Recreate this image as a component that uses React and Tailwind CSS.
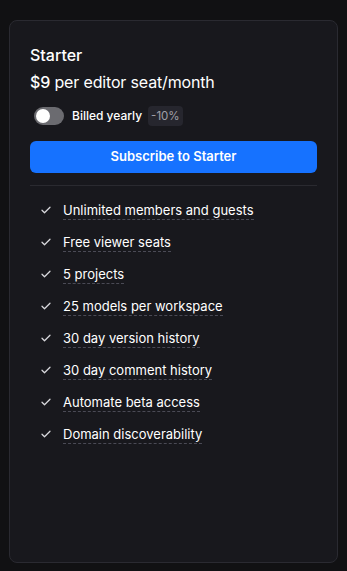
const FEATURES = [
  'Unlimited members and guests',
  'Free viewer seats',
  '5 projects',
  '25 models per workspace',
  '30 day version history',
  '30 day comment history',
  'Automate beta access',
  'Domain discoverability',
];

function Check() {
  return (
    <svg width="12" height="12" viewBox="0 0 24 24" fill="none" stroke="currentColor" strokeWidth="2.5" strokeLinecap="round" strokeLinejoin="round">
      <path d="M4 12.5l5 5L20 6.5" />
    </svg>
  );
}

export default function App() {
  return (
    <div className="min-h-[571px] bg-[#111113] px-[9px] pt-5 pb-2 text-white" style={{ fontFamily: 'Inter, "Noto Sans", sans-serif' }}>
      <div className="h-[543px] rounded-lg border border-[#2a2a31] bg-[#18181d] p-5">
        <h3 className="text-[16px] font-medium leading-7">Starter</h3>
        <p className="mt-[1px] text-[16px] leading-6 tracking-[-0.01em]">
          <span className="font-medium">$9</span> per editor seat/month
        </p>
        <div className="mt-3 flex items-center pl-1">
          <span className="relative inline-block h-[18px] w-[30px] rounded-full bg-[#6b6b70]">
            <span className="absolute left-[2px] top-[2px] h-[14px] w-[14px] rounded-full bg-white" />
          </span>
          <span className="ml-2 text-[12px] font-medium">Billed yearly</span>
          <span className="ml-[6px] rounded bg-[#26262e] px-[3px] py-0.5 text-[11.5px] leading-4 text-[#a0a0a8]">-10%</span>
        </div>
        <button className="mt-[15px] flex h-8 w-full items-center justify-center rounded-md bg-[#1672ff] text-[13px] font-semibold text-white">
          Subscribe to Starter
        </button>
        <div className="mt-3 h-px bg-[#2a2a30]" />
        <ul className="mt-2 pl-[10px]">
          {FEATURES.map((f) => (
            <li key={f} className="flex h-8 items-center gap-[11px]">
              <span className="text-[#d8d8dc]"><Check /></span>
              <span className="border-b border-dashed border-[#4a4a55] text-[13px] leading-[18px]">{f}</span>
            </li>
          ))}
        </ul>
      </div>
    </div>
  );
}
